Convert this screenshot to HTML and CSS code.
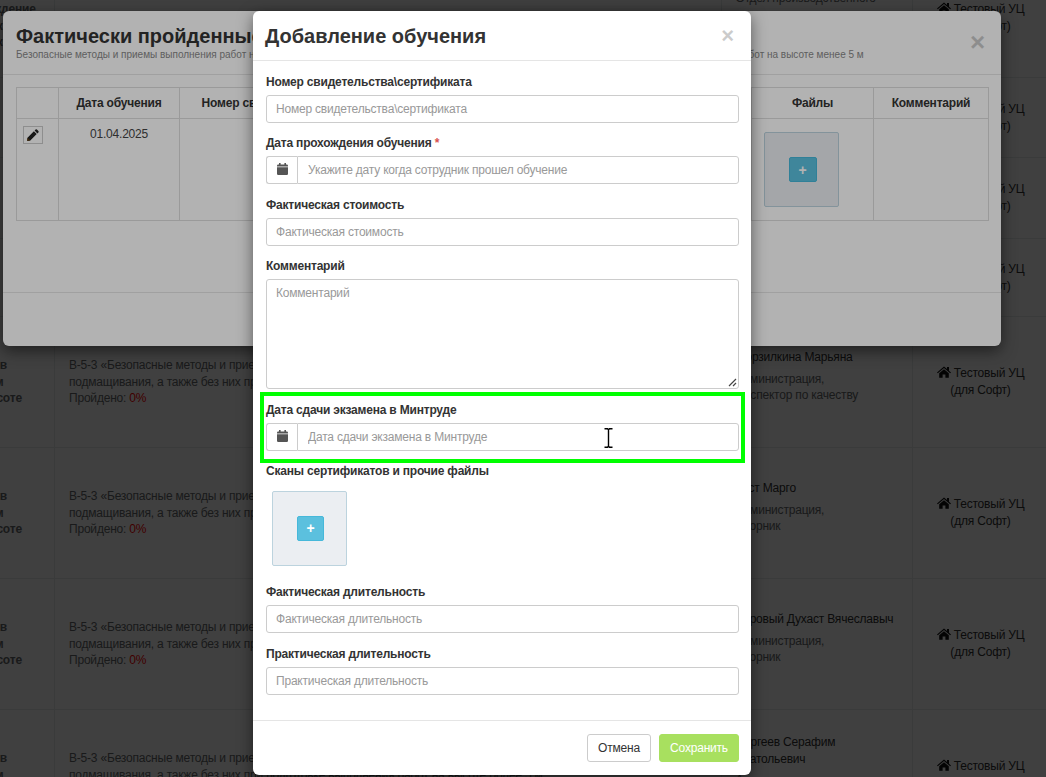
FILE: index.html
```html
<!DOCTYPE html>
<html lang="ru">
<head>
    <meta charset="UTF-8">
    <title>Добавление обучения</title>
    <link rel="stylesheet" href="styles.css">
</head>
<body>
    <svg class="icon-defs" width="0" height="0">
        <symbol id="ic-home" viewBox="0 0 14 12">
            <path d="M7 0.4 L10 3 V1 H12 V4.7 L14 6.5 L13.2 7.3 L7 2 L0.8 7.3 L0 6.5 Z M2.2 7.3 L7 3.2 L11.8 7.3 V11.8 H8.4 V8.4 H5.6 V11.8 H2.2 Z"/>
        </symbol>
        <symbol id="ic-cal" viewBox="0 0 11 12">
            <path d="M0 4.2 H11 V10.8 Q11 12 9.8 12 H1.2 Q0 12 0 10.8 Z"/>
            <path d="M1.2 1.6 H2 V0 H3.6 V1.6 H7.4 V0 H9 V1.6 H9.8 Q11 1.6 11 2.8 V3.4 H0 V2.8 Q0 1.6 1.2 1.6 Z"/>
        </symbol>
    </svg>

    <!-- страница за окнами -->
    <div class="page">
        <table class="courses">
            <colgroup>
                <col class="col-type"><col class="col-course"><col class="col-person"><col class="col-center">
            </colgroup>
            <tr class="row-a">
                <td class="type">Обучение<br>Учеты прохождение<br>Допуск к<br>Допуск к</td>
                <td></td>
                <td><div class="person">Иванов Иван</div><div class="job">Отдел производственного<br>контроля,<br>Инженер<br>по охране труда</div></td>
                <td class="center"><svg class="home"><use href="#ic-home"/></svg> Тестовый УЦ<br>(для Софт)</td>
            </tr>
            <tr class="row-b"><td></td><td></td><td></td><td class="center"><svg class="home"><use href="#ic-home"/></svg> Тестовый УЦ<br>(для Софт)</td></tr>
            <tr class="row-b2"><td></td><td></td><td></td><td class="center"><svg class="home"><use href="#ic-home"/></svg> Тестовый УЦ<br>(для Софт)</td></tr>
            <tr class="row-c"><td></td><td></td><td></td><td class="center"><svg class="home"><use href="#ic-home"/></svg> Тестовый УЦ<br>(для Софт)</td></tr>
            <tr class="row-d">
                <td class="type">Допуски в<br>на лесам<br>труд на высоте</td>
                <td>В-5-3 «Безопасные методы и приемы выполнения работ на высоте с применением средств<br>подмащивания, а также без них при подготовке выполнения работ на высоте более 5 м<br>Пройдено: <span class="zero">0%</span></td>
                <td><div class="person">Морзилкина Марьяна</div><div class="job">Администрация,<br>Инспектор по качеству</div></td>
                <td class="center"><svg class="home"><use href="#ic-home"/></svg> Тестовый УЦ<br>(для Софт)</td>
            </tr>
            <tr class="row-d">
                <td class="type">Допуски в<br>на лесам<br>труд на высоте</td>
                <td>В-5-3 «Безопасные методы и приемы выполнения работ на высоте с применением средств<br>подмащивания, а также без них при подготовке выполнения работ на высоте более 5 м<br>Пройдено: <span class="zero">0%</span></td>
                <td><div class="person">Тест Марго</div><div class="job">Администрация,<br>Дворник</div></td>
                <td class="center"><svg class="home"><use href="#ic-home"/></svg> Тестовый УЦ<br>(для Софт)</td>
            </tr>
            <tr class="row-d">
                <td class="type">Допуски в<br>на лесам<br>труд на высоте</td>
                <td>В-5-3 «Безопасные методы и приемы выполнения работ на высоте с применением средств<br>подмащивания, а также без них при подготовке выполнения работ на высоте более 5 м<br>Пройдено: <span class="zero">0%</span></td>
                <td><div class="person">Суровый Духаст Вячеславыч</div><div class="job">Администрация,<br>Дворник</div></td>
                <td class="center"><svg class="home"><use href="#ic-home"/></svg> Тестовый УЦ<br>(для Софт)</td>
            </tr>
            <tr class="row-d">
                <td class="type">Допуски в<br>на лесам<br>труд на высоте</td>
                <td>В-5-3 «Безопасные методы и приемы выполнения работ на высоте с применением средств<br>подмащивания, а также без них при подготовке выполнения работ на высоте более 5 м<br>Пройдено: <span class="zero">0%</span></td>
                <td><div class="person">Сергеев Серафим<br>Анатольевич</div><div class="job">Администрация,<br>Дворник</div></td>
                <td class="center"><svg class="home"><use href="#ic-home"/></svg> Тестовый УЦ<br>(для Софт)</td>
            </tr>
        </table>
    </div>
    <div class="backdrop backdrop-first"></div>

    <!-- первое окно -->
    <div class="modal modal-history">
        <div class="history-head">
            <h2>Фактически пройденные обучения</h2>
            <small>Безопасные методы и приемы выполнения работ на высоте с применением средств подмащивания, лесов, а также без них при подготовке к выполнению работ на высоте менее 5 м</small>
            <span class="close close-history">×</span>
        </div>
        <div class="history-body">
            <table class="history">
                <colgroup>
                    <col class="h-edit"><col class="h-date"><col class="h-num"><col><col class="h-files"><col class="h-comment">
                </colgroup>
                <tr>
                    <th></th><th>Дата обучения</th><th>Номер свидетельства</th><th>Стоимость</th><th>Файлы</th><th>Комментарий</th>
                </tr>
                <tr>
                    <td class="edit-cell">
                        <span class="edit-btn">
                            <svg width="12" height="12" viewBox="0 0 12 12"><path d="M8.6 0.6 Q9.2 0 9.9 0.6 L11.4 2.1 Q12 2.8 11.4 3.4 L10.4 4.4 L7.6 1.6 Z M6.9 2.3 L9.7 5.1 L3.3 11.5 L0.2 11.9 L0.5 8.7 Z" fill="#222"/><path d="M0.5 8.7 L0.2 11.9 L3.3 11.5 Z" fill="#5a3a10"/></svg>
                        </span>
                    </td>
                    <td class="date-cell">01.04.2025</td>
                    <td></td>
                    <td></td>
                    <td class="files-cell"><div class="tile"><span class="plus">+</span></div></td>
                    <td></td>
                </tr>
            </table>
        </div>
        <div class="history-foot"></div>
    </div>
    <div class="backdrop backdrop-second"></div>

    <!-- второе окно -->
    <div class="modal modal-add">
        <div class="add-head">
            <h2>Добавление обучения</h2>
            <span class="close close-add">×</span>
        </div>
        <form class="add-body">
            <div class="group">
                <label>Номер свидетельства\сертификата</label>
                <input type="text" placeholder="Номер свидетельства\сертификата">
            </div>
            <div class="group">
                <label>Дата прохождения обучения <span class="req">*</span></label>
                <div class="date-input">
                    <span class="addon"><svg class="cal"><use href="#ic-cal"/></svg></span>
                    <input type="text" placeholder="Укажите дату когда сотрудник прошел обучение">
                </div>
            </div>
            <div class="group">
                <label>Фактическая стоимость</label>
                <input type="text" placeholder="Фактическая стоимость">
            </div>
            <div class="group">
                <label>Комментарий</label>
                <textarea placeholder="Комментарий"></textarea>
            </div>
            <div class="group">
                <label>Дата сдачи экзамена в Минтруде</label>
                <div class="date-input">
                    <span class="addon"><svg class="cal"><use href="#ic-cal"/></svg></span>
                    <input type="text" placeholder="Дата сдачи экзамена в Минтруде">
                </div>
            </div>
            <div class="group group-files">
                <label>Сканы сертификатов и прочие файлы</label>
                <div class="tile tile-add"><span class="plus">+</span></div>
            </div>
            <div class="group">
                <label>Фактическая длительность</label>
                <input type="text" placeholder="Фактическая длительность">
            </div>
            <div class="group">
                <label>Практическая длительность</label>
                <input type="text" placeholder="Практическая длительность">
            </div>
        </form>
        <div class="add-foot">
            <button type="button" class="btn-cancel">Отмена</button>
            <button type="button" class="btn-save">Сохранить</button>
        </div>
        <svg class="grip" width="9" height="9" viewBox="0 0 9 9">
            <path d="M1 8 L8 1 M5 8 L8 5" stroke="#444" stroke-width="1.2" fill="none"/>
        </svg>
        <!-- пометка на скриншоте и курсор -->
        <div class="mark"></div>
        <svg class="ibeam" width="9" height="20" viewBox="0 0 9 20">
            <path d="M0.5 0.7 H3.5 L4.5 1.7 L5.5 0.7 H8.5 M4.5 1.7 V18.3 M0.5 19.3 H3.5 L4.5 18.3 L5.5 19.3 H8.5" fill="none" stroke="#000" stroke-width="1.4"/>
        </svg>
    </div>
</body>
</html>
```

FILE: styles.css
```css
* {
    margin: 0;
    padding: 0;
    box-sizing: border-box;
}

html, body {
    height: 100%;
    overflow: hidden;
}

body {
    font-family: "Liberation Sans", Arial, sans-serif;
    font-size: 12px;
    letter-spacing: -0.2px;
    color: #676a6c;
    background: #fff;
}

.icon-defs {
    position: absolute;
}

/* Страница */
.page {
    margin: -43px 0 0 -100px;
    width: 1146px;
}

.courses {
    width: 1146px;
    border-collapse: collapse;
    table-layout: fixed;
    line-height: 16.5px;
}

.col-type { width: 154px; }
.col-course { width: 666.5px; }
.col-person { width: 191.5px; }
.col-center { width: 134px; }

.courses td {
    border: 1px solid #e7eaec;
    padding: 8px 14px;
    vertical-align: middle;
    overflow: hidden;
    white-space: nowrap;
}

.row-a { height: 120px; }
.row-b { height: 80px; }
.row-b2 { height: 81px; }
.row-c { height: 78px; }
.row-d { height: 131px; }

.courses .type {
    text-align: center;
    font-weight: bold;
}

.person {
    color: #333;
    margin-bottom: 5px;
}

.job {
    color: #676a6c;
    margin-bottom: 11px;
}

.courses .center {
    text-align: center;
    color: #333;
    line-height: 17px;
    padding-left: 15px;
    padding-right: 13px;
}

.home {
    width: 14px;
    height: 12px;
    fill: #111;
    vertical-align: -1px;
}

.zero {
    color: #ff0000;
}

/* Окна */
.backdrop {
    position: absolute;
    inset: 0;
}

.backdrop-first { background: rgba(0, 0, 0, 0.64); }
.backdrop-second { background: rgba(0, 0, 0, 0.3); }

.modal {
    position: absolute;
    background: #fff;
    border-radius: 6px;
    box-shadow: 0 5px 15px rgba(0, 0, 0, 0.5);
    overflow: hidden;
}

.close {
    position: absolute;
    font-weight: bold;
    color: #000;
    opacity: 0.2;
    line-height: 1;
}

/* Первое окно */
.modal-history {
    left: 3px;
    top: 11px;
    width: 998px;
    height: 335px;
}

.history-head {
    height: 64px;
    padding: 12px 13px 0;
    border-bottom: 1px solid #e5e5e5;
    white-space: nowrap;
}

.history-head h2 {
    font-size: 20px;
    line-height: 26px;
    letter-spacing: 0;
    color: #333;
}

.history-head small {
    display: block;
    font-size: 10px;
    line-height: 12px;
    letter-spacing: 0;
    color: #888;
}

.close-history {
    right: 16px;
    top: 18px;
    font-size: 26px;
}

.history-body {
    padding: 12px 12px 0 13px;
    height: 218px;
    border-bottom: 1px solid #e5e5e5;
}

.history {
    width: 973px;
    border-collapse: collapse;
    table-layout: fixed;
}

.h-edit { width: 42px; }
.h-date { width: 121px; }
.h-num { width: 172px; }
.h-files { width: 122px; }
.h-comment { width: 115px; }

.history th,
.history td {
    border: 1px solid #ddd;
    text-align: center;
    vertical-align: top;
}

.history th {
    height: 31px;
    vertical-align: middle;
    color: #333;
}

.history td {
    height: 102px;
    color: #444;
}

.date-cell {
    padding-top: 8px;
}

.edit-cell {
    padding: 7px 0 0 6px;
    text-align: left !important;
}

.edit-btn {
    display: flex;
    align-items: center;
    justify-content: center;
    width: 20px;
    height: 18px;
    border: 1px solid #ccc;
}

.files-cell {
    padding: 13px 0 0 12px;
    text-align: left !important;
}

.tile {
    width: 75px;
    height: 75px;
    display: flex;
    align-items: center;
    justify-content: center;
    background: #ebeef2;
    border: 1px solid #bcd3de;
    border-radius: 2px;
}

.plus {
    width: 28px;
    height: 25px;
    margin-left: 2px;
    display: flex;
    align-items: center;
    justify-content: center;
    background: #5bc0de;
    border: 1px solid #46b8da;
    border-radius: 2px;
    color: #fff;
    font-size: 14px;
    font-weight: bold;
}

.history-foot {
    height: 53px;
}

/* Второе окно */
.modal-add {
    left: 253px;
    top: 11px;
    width: 498px;
    height: 764px;
}

.add-head {
    height: 50px;
    padding: 14px 13px 0 12px;
    border-bottom: 1px solid #e5e5e5;
}

.add-head h2 {
    font-size: 20px;
    line-height: 22px;
    letter-spacing: 0;
    color: #333;
}

.close-add {
    right: 17px;
    top: 14px;
    font-size: 22px;
}

.add-body {
    height: 660px;
    padding: 11.95px 12px 0 13px;
    border-bottom: 1px solid #e5e5e5;
}

.group {
    margin-bottom: 11.5px;
}

.group label {
    display: block;
    height: 17px;
    line-height: 19px;
    margin-bottom: 5px;
    font-weight: bold;
    color: #333;
}

.req {
    color: #d9534f;
}

input,
textarea {
    display: block;
    width: 100%;
    height: 28px;
    padding: 0 9px;
    border: 1px solid #ccc;
    border-radius: 3px;
    font-family: inherit;
    font-size: 12px;
    letter-spacing: inherit;
    background: #fff;
    outline: none;
}

textarea {
    height: 110px;
    padding: 6px 9px;
    resize: none;
}

input::placeholder,
textarea::placeholder {
    color: #999;
    opacity: 1;
}

.date-input {
    display: flex;
}

.date-input input {
    flex: 1;
    padding-left: 10px;
    border-radius: 0 3px 3px 0;
}

.addon {
    width: 31px;
    flex: none;
    display: flex;
    align-items: center;
    justify-content: center;
    border: 1px solid #ccc;
    border-right: 0;
    border-radius: 3px 0 0 3px;
    background: #fff;
}

.cal {
    width: 11px;
    height: 12px;
    fill: #555;
    margin-top: -2px;
}

.group-files {
    margin-bottom: 17.5px;
}

.tile-add {
    margin: 11.5px 0 0 6px;
}

.tile-add .plus {
    width: 27px;
}

.add-foot {
    display: flex;
    justify-content: flex-end;
    gap: 8px;
    padding: 13px 12px 0;
}

.add-foot button {
    height: 28px;
    border-radius: 3px;
    font-family: inherit;
    font-size: 12px;
    letter-spacing: inherit;
}

.btn-cancel {
    width: 64px;
    background: #fff;
    border: 1px solid #ccc;
    color: #333;
}

.btn-save {
    width: 80px;
    background: #a8e05f;
    border: 1px solid #a8e05f;
    color: #fff;
}

.grip {
    position: absolute;
    left: 475px;
    top: 367px;
}

.mark {
    position: absolute;
    left: 7px;
    top: 381px;
    width: 485px;
    height: 71px;
    border: 4px solid #00ff00;
}

.ibeam {
    position: absolute;
    left: 351px;
    top: 417px;
}
```
